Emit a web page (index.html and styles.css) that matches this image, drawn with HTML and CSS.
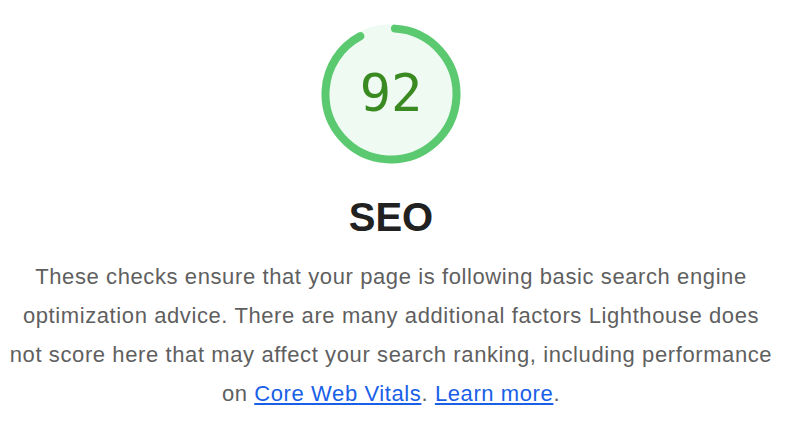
FILE: index.html
```html
<!DOCTYPE html>
<html lang="en">

<head>
    <meta charset="UTF-8">
    <meta name="viewport" content="width=device-width, initial-scale=1.0">
    <title>SEO</title>
    <link rel="stylesheet" href="styles.css">
</head>

<body>
    <div class="category">
        <div class="gauge">
            <svg viewBox="0 0 140 140" width="140" height="140">
                <circle class="gauge-base" cx="70" cy="70" r="65.5"></circle>
                <circle class="gauge-arc" cx="70" cy="70" r="65.5"
                    stroke-dasharray="375 412" transform="rotate(-86.5 70 70)"></circle>
            </svg>
            <div class="gauge-score">92</div>
        </div>
        <h2 class="title">SEO</h2>
        <p class="description">
            These checks ensure that your page is following basic search engine optimization advice. There are many
            additional factors Lighthouse does not score here that may affect your search ranking, including
            performance on <a href="#">Core Web Vitals</a>. <a href="#">Learn more</a>.
        </p>
    </div>
</body>

</html>
```

FILE: styles.css
```css
body {
    margin: 0;
    font-family: "Liberation Sans", Arial, sans-serif;
    background: #fff;
}

.category {
    display: flex;
    flex-direction: column;
    align-items: center;
    padding: 24px 18px 0 0;
}

.gauge {
    position: relative;
    width: 140px;
    height: 140px;
}

.gauge svg {
    display: block;
}

.gauge-base {
    fill: #effaf2;
    stroke: #effaf2;
    stroke-width: 8;
}

.gauge-arc {
    fill: none;
    stroke: #5ac96f;
    stroke-width: 8;
    stroke-linecap: round;
}

.gauge-score {
    position: absolute;
    inset: 0 0 3px;
    display: flex;
    align-items: center;
    justify-content: center;
    font-family: "DejaVu Sans Mono", monospace;
    font-size: 52px;
    color: #3a8a22;
}

.title {
    margin: 29px 0 0;
    font-size: 40px;
    font-weight: bold;
    color: #212121;
    line-height: 48px;
}

.description {
    margin: 16px 0 0;
    width: 768px;
    font-size: 22px;
    letter-spacing: 0.6px;
    line-height: 39px;
    color: #5f5f5f;
    text-align: center;
}

.description a {
    color: #1a5fe8;
}
```
